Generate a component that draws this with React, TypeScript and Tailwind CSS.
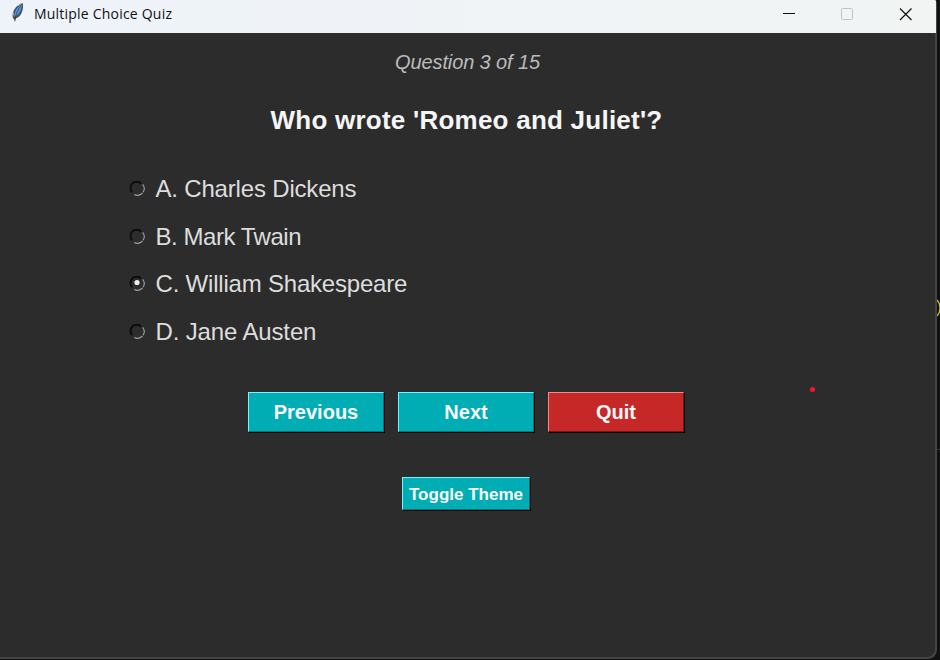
const ARIAL = "font-['Liberation_Sans',Arial,sans-serif]";

function Feather() {
  return (
    <svg width="16" height="22" viewBox="0 0 16 22" className="ml-[10px] shrink-0">
      <path d="M12.800 1.200C9 1.500 4.500 5.500 3 10.500c-.6 2.400-.5 4.500.2 6.200l1 .4.8 3.200.7-3.800c3-1 5-3 6.200-6.200 1.200-3.200 1.500-6.500.9-9.100Z" fill="#4a535c" />
      <path d="M11.900 2.800C7.500 4.500 4.600 8.500 4.200 15c3.600-1.500 7-5.500 7.700-12.200Z" fill="#4f9be8" />
      <path d="M11 4C8.200 7 6 11 4.800 18.500" stroke="#1d3046" strokeWidth=".7" fill="none" />
      <path d="M10.800 2 8 3.800M3.400 10.500v3" stroke="#a8abb0" strokeWidth="1" fill="none" />
    </svg>
  );
}

function Radio({ checked }: { checked: boolean }) {
  return (
    <svg width="16" height="16" viewBox="0 0 16 16" className="shrink-0">
      <path d="M3.200 12.200A6 6 0 0 1 12.200 3.600" stroke="#0c0c0c" strokeWidth="1.900" fill="none" />
      <path d="M13.700 4.300A6.600 6.600 0 0 1 3.200 12.700" stroke="#a2a2a2" strokeWidth="1.100" fill="none" strokeDasharray="8 .8 9" />
      {checked && <circle cx="8" cy="7.500" r="2.600" fill="#eeeeee" />}
    </svg>
  );
}

const options = [
  { text: "A. Charles Dickens", checked: false, tracking: "tracking-[-0.180px]" },
  { text: "B. Mark Twain", checked: false, tracking: "tracking-[-0.460px]" },
  { text: "C. William Shakespeare", checked: true, tracking: "tracking-[-0.200px]" },
  { text: "D. Jane Austen", checked: false, tracking: "tracking-[-0.140px]" },
];

const teal =
  "bg-[#00adb5] border-t-[#76f5fa] border-l-[#76f5fa] border-r-[#00767b] border-b-[#00767b]";
const red =
  "bg-[#c62828] border-t-[#f08b8b] border-l-[#f08b8b] border-r-[#791515] border-b-[#791515]";

function TkButton({ label, tone, size }: { label: string; tone: string; size: string }) {
  return (
    <button className={`flex shrink-0 items-center justify-center whitespace-nowrap border font-bold text-[#fafafa] shadow-[1px_1px_0_#050505] ${tone} ${size}`}>
      {label}
    </button>
  );
}

export default function App() {
  return (
    <div className={`relative h-[660px] w-[940px] overflow-hidden bg-[#111111] ${ARIAL}`}>
      <div className="flex h-[659px] w-[937px] flex-col overflow-hidden rounded-tr-[3px] rounded-br-[9px] bg-[#444444]">
        <header className="flex h-[33px] w-[936px] shrink-0 items-start bg-linear-to-r from-[#eef3fa] to-[#f1f4f3] pt-[2px]">
          <Feather />
          <h1 className="ml-[8px] grow font-['Open_Sans','Noto_Sans',sans-serif] text-[14px] leading-[23px] tracking-[0.210px] text-[#111111]">
            Multiple Choice Quiz
          </h1>
          <svg width="161" height="24" viewBox="0 0 161 24" fill="none" className="shrink-0">
            <path d="M8 11.500h12" stroke="#111" />
            <rect x="66.500" y="6.500" width="11" height="11" rx="1" stroke="#c0c3c5" />
            <path d="m125 6.500 11.500 11.500M136.500 6.500 125 18" stroke="#111" strokeWidth="1.200" />
          </svg>
        </header>
        <main className="flex h-[624px] w-[935px] flex-col rounded-br-[8px] bg-[#2c2c2c] pr-[2px]">
          <p className="mt-[17px] pl-[2px] text-center text-[20px] leading-6 tracking-[-0.120px] text-[#bbbbbb] italic">Question 3 of 15</p>
          <h2 className="mt-[30px] text-center text-[26px] leading-8 font-bold tracking-[0.240px] text-[#f5f5f5]">
            Who wrote 'Romeo and Juliet'?
          </h2>
          <div className="mt-[36px] ml-[129px] flex flex-col gap-[15.500px]">
            {options.map((o) => (
              <label key={o.text} className={`flex h-8 items-center gap-[10.500px] text-[24px] leading-8 text-[#dddddd] ${o.tracking}`}>
                <Radio checked={o.checked} />
                <span className="pt-[2px]">{o.text}</span>
              </label>
            ))}
          </div>
          <div className="mt-[45.500px] flex justify-center gap-[14px] pr-[1px]">
            <TkButton label="Previous" tone={teal} size="h-[40px] w-[136px] text-[20px]" />
            <TkButton label="Next" tone={teal} size="h-[40px] w-[136px] text-[20px]" />
            <TkButton label="Quit" tone={red} size="h-[40px] w-[136px] text-[20px]" />
          </div>
          <div className="mt-[45px] flex justify-center pr-[1px]">
            <TkButton label="Toggle Theme" tone={teal} size="h-[33px] w-[128px] pt-[2px] text-[17px]" />
          </div>
        </main>
      </div>
      <div className="absolute top-[387px] left-[810px] size-[5px] rounded-full bg-[#ed1c24]" />
      <svg className="absolute top-[299px] left-[937px]" width="3" height="19" viewBox="0 0 3 19" fill="none">
        <path d="M0 1C4 5 4 13 0 17" stroke="#c6c51e" strokeWidth="1.300" />
      </svg>
      <div className="absolute top-[449px] left-[937px] h-px w-[3px] bg-[#333333]" />
    </div>
  );
}
